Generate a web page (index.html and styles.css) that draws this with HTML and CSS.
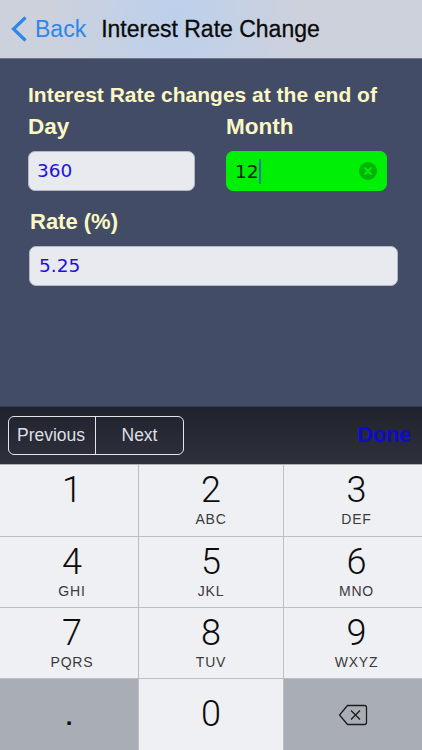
FILE: index.html
```html
<!DOCTYPE html>
<html lang="en">
<head>
  <meta charset="UTF-8">
  <meta name="viewport" content="width=device-width, initial-scale=1.0">
  <title>Interest Rate Change</title>
  <link rel="stylesheet" href="styles.css">
</head>
<body>
  <div class="screen">
    <header class="navbar">
      <a class="back">
        <svg class="back-icon" width="18" height="28" viewBox="0 0 18 28">
          <path d="M15.5 2.5 L3.5 14 L15.5 25.5" fill="none" stroke="#2f86ea" stroke-width="3.2"/>
        </svg>
        <span>Back</span>
      </a>
      <h1 class="title">Interest Rate Change</h1>
    </header>

    <main class="form">
      <p class="heading">Interest Rate changes at the end of</p>
      <div class="columns">
        <div class="day-col">
          <label class="label">Day</label>
          <div class="field">360</div>
        </div>
        <div class="month-col">
          <label class="label">Month</label>
          <div class="field active">
            <span>12</span><span class="caret"></span>
            <svg class="clear-icon" width="18" height="18" viewBox="0 0 18 18">
              <circle cx="9" cy="9" r="9" fill="#00b408"/>
              <path d="M5.5 5.5 L12.5 12.5 M12.5 5.5 L5.5 12.5" stroke="#00ee08" stroke-width="2"/>
            </svg>
          </div>
        </div>
      </div>
      <div class="rate-row">
        <label class="label">Rate (%)</label>
        <div class="field">5.25</div>
      </div>
    </main>

    <div class="toolbar">
      <div class="segments">
        <button class="segment prev">Previous</button>
        <button class="segment next">Next</button>
      </div>
      <button class="done">Done</button>
    </div>

    <div class="keyboard">
      <div class="key"><span class="digit">1</span></div>
      <div class="key"><span class="digit">2</span><span class="letters">ABC</span></div>
      <div class="key"><span class="digit">3</span><span class="letters">DEF</span></div>
      <div class="key"><span class="digit">4</span><span class="letters">GHI</span></div>
      <div class="key"><span class="digit">5</span><span class="letters">JKL</span></div>
      <div class="key"><span class="digit">6</span><span class="letters">MNO</span></div>
      <div class="key"><span class="digit">7</span><span class="letters">PQRS</span></div>
      <div class="key"><span class="digit">8</span><span class="letters">TUV</span></div>
      <div class="key"><span class="digit">9</span><span class="letters">WXYZ</span></div>
      <div class="key dark"><span class="dot">.</span></div>
      <div class="key zero"><span class="digit">0</span></div>
      <div class="key dark">
        <svg width="30" height="22" viewBox="0 0 30 22">
          <path d="M9.5 1.5 H26.5 Q28.5 1.5 28.5 3.5 V18.5 Q28.5 20.5 26.5 20.5 H9.5 L1.5 11 Z" fill="none" stroke="#1c1c1e" stroke-width="1.3"/>
          <path d="M13 6.5 L22 15.5 M22 6.5 L13 15.5" stroke="#1c1c1e" stroke-width="1.3"/>
        </svg>
      </div>
    </div>
  </div>
</body>
</html>
```

FILE: styles.css
```css
* {
  box-sizing: border-box;
}

body {
  margin: 0;
  font-family: 'Liberation Sans', Arial, sans-serif;
}

.screen {
  width: 422px;
  height: 750px;
  display: flex;
  flex-direction: column;
  overflow: hidden;
}

.navbar {
  height: 59px;
  display: flex;
  align-items: center;
  padding: 0 0 0 10px;
  background: radial-gradient(ellipse 130px 110px at 175px 20px, #bcd0ec, #cdd1dc 100%);
  border-bottom: 1px solid #6d7385;
}

.back {
  display: flex;
  align-items: center;
  gap: 7px;
  font-size: 23px;
  color: #2f86ea;
}

.back-icon {
  display: block;
}

.title {
  margin: 0 0 0 15px;
  font-size: 23px;
  font-weight: normal;
  color: #0a0a0a;
  -webkit-text-stroke: 0.3px #0a0a0a;
}

.form {
  height: 347px;
  padding: 23px 24px 0 28px;
  background: #434c66;
  color: #fbf8c4;
}

.heading {
  margin: 0;
  font-size: 21px;
  line-height: 25px;
  font-weight: bold;
}

.columns {
  display: flex;
  margin-top: 7px;
}

.day-col {
  width: 167px;
}

.month-col {
  width: 161px;
  margin-left: 31px;
}

.label {
  display: block;
  font-size: 22.5px;
  line-height: 26px;
  font-weight: bold;
  margin-bottom: 11px;
}

.field {
  height: 40px;
  display: flex;
  align-items: center;
  padding: 0 9px 2px 8px;
  border: 1px solid #b5b8c4;
  border-radius: 7px;
  background: #e9eaf0;
  font-family: 'DejaVu Sans', Verdana, sans-serif;
  font-size: 18.5px;
  color: #1c12d8;
}

.field.active {
  padding-bottom: 0;
  background: #00ef06;
  border-color: #00ef06;
  color: #0a200a;
}

.caret {
  width: 2px;
  height: 25px;
  background: #2a7a9c;
}

.clear-icon {
  margin-left: auto;
}

.rate-row {
  margin: 18px 0 0 1px;
}

.rate-row .label {
  margin-bottom: 11px;
  padding-left: 1px;
  font-size: 22px;
}

.rate-row .field {
  padding-left: 9px;
}

.toolbar {
  height: 58px;
  display: flex;
  align-items: center;
  justify-content: space-between;
  padding: 0 11px 0 8px;
  border-top: 1px solid #363c50;
  background: linear-gradient(#20232e, #2e313c);
}

.segments {
  display: flex;
  width: 176px;
  height: 39px;
  border: 1px solid #e4e5e8;
  border-radius: 6px;
}

.segment {
  border: none;
  background: none;
  padding: 0 2px 0 0;
  font-family: inherit;
  font-size: 17.5px;
  color: #dedfe3;
}

.prev {
  width: 87px;
  border-right: 1px solid #e4e5e8;
}

.next {
  flex: 1;
  padding: 0;
}

.done {
  border: none;
  background: none;
  padding: 0;
  font-family: inherit;
  font-size: 21.5px;
  font-weight: bold;
  color: #0d0bd0;
}

.keyboard {
  flex: 1;
  display: grid;
  grid-template-columns: 139px 145px 138px;
  grid-template-rows: 72px 71px 71px 71px;
  background: #eef0f3;
  border-top: 1px solid #aeb0b8;
}

.key {
  display: flex;
  flex-direction: column;
  align-items: center;
  padding-top: 5px;
  color: #0c0c0c;
  border-right: 1px solid #bcbec6;
  border-bottom: 1px solid #bcbec6;
}

.key:nth-child(3n+1) {
  padding-left: 6px;
}

.key:nth-child(3n) {
  padding-left: 7px;
  border-right: none;
}

.key.dark {
  justify-content: center;
  padding: 0;
  background: #a9adb6;
}

.key.zero {
  justify-content: center;
  padding-top: 0;
}

.key:nth-last-child(-n+3) {
  border-bottom: none;
}

.digit {
  font-family: Roboto, 'Liberation Sans', sans-serif;
  font-weight: 300;
  font-size: 36px;
  line-height: 41px;
}

.letters {
  font-size: 14px;
  line-height: 16px;
  letter-spacing: 0.8px;
  color: #3a3a3c;
}

.dot {
  padding-top: 4px;
  font-size: 24px;
  line-height: 24px;
  font-weight: bold;
}
```
